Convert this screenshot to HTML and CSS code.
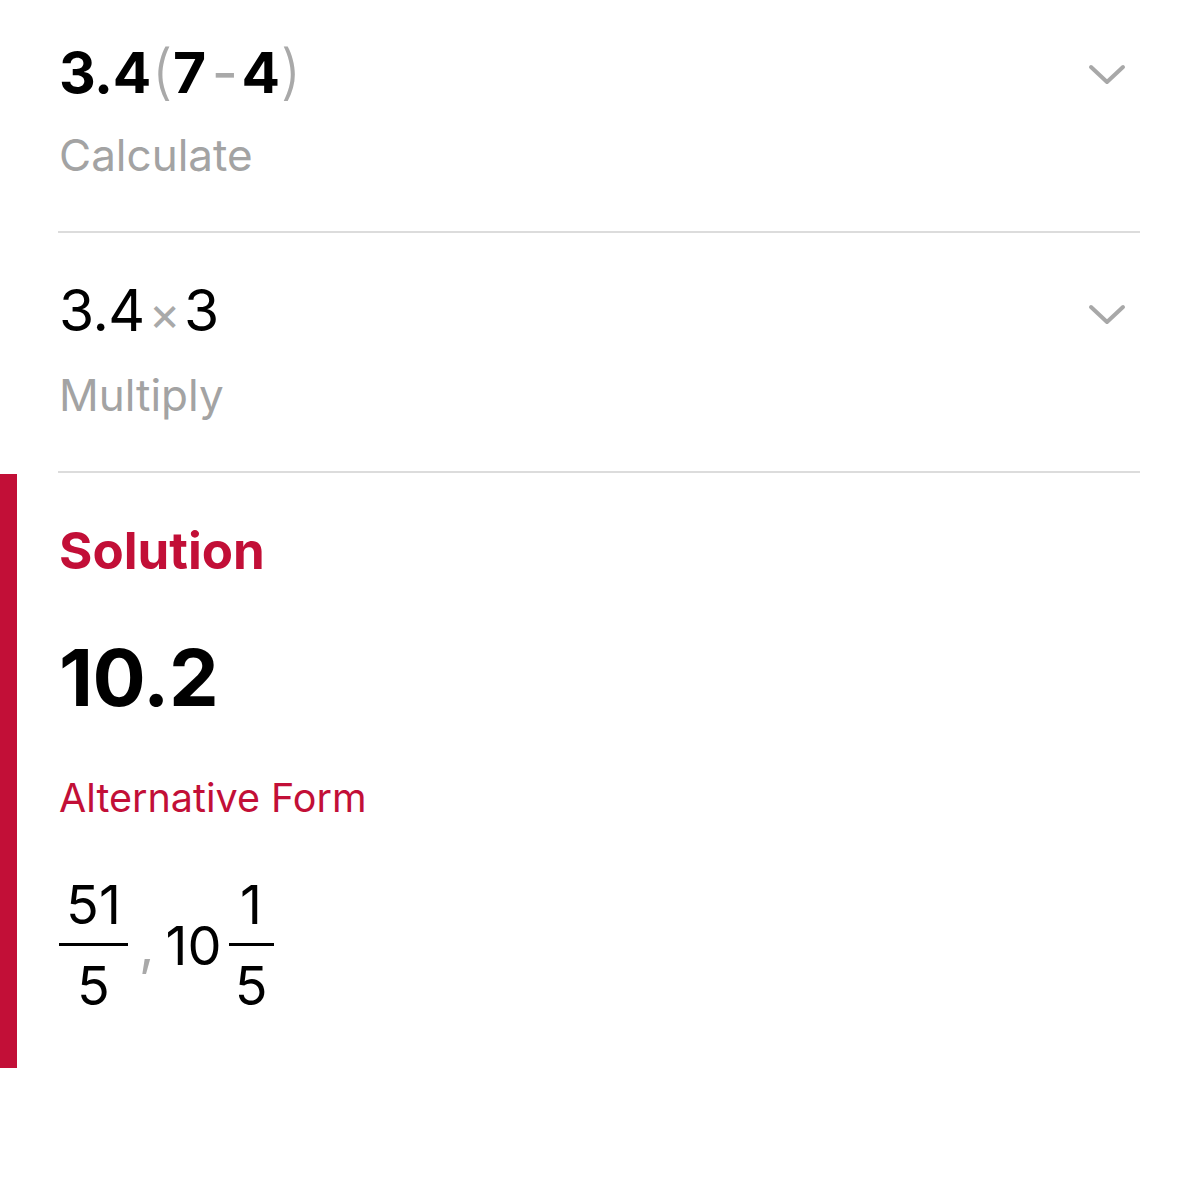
FILE: index.html
```html
<!DOCTYPE html>
<html>
<head>
<meta charset="utf-8">
<link rel="stylesheet" href="styles.css">
</head>
<body>
<div class="steps">
  <div class="step">
    <div class="step-row">
      <div class="expr expr-bold">3.4<span class="paren">(</span>7<span class="op minus">-</span>4<span class="paren">)</span></div>
      <svg class="chevron" viewBox="0 0 40 24" width="40" height="24"><path d="M4 4 L20 19 L36 4" fill="none" stroke="#a8a8a8" stroke-width="4" stroke-linecap="round" stroke-linejoin="round"/></svg>
    </div>
    <div class="label">Calculate</div>
  </div>
  <div class="step">
    <div class="step-row">
      <div class="expr">3.4<span class="op times">×</span>3</div>
      <svg class="chevron" viewBox="0 0 40 24" width="40" height="24"><path d="M4 4 L20 19 L36 4" fill="none" stroke="#a8a8a8" stroke-width="4" stroke-linecap="round" stroke-linejoin="round"/></svg>
    </div>
    <div class="label">Multiply</div>
  </div>
</div>
<div class="solution">
  <div class="sol-title">Solution</div>
  <div class="sol-value">10.2</div>
  <div class="alt-title">Alternative Form</div>
  <div class="alt-forms">
    <div class="frac"><span class="num">51</span><span class="bar"></span><span class="den">5</span></div>
    <span class="comma">,</span>
    <span class="whole">10</span>
    <div class="frac frac-small"><span class="num">1</span><span class="bar"></span><span class="den">5</span></div>
  </div>
</div>
</body>
</html>
```
FILE: styles.css
```css
html, body {
  margin: 0;
  padding: 0;
  background: #ffffff;
}
body {
  font-family: "Inter", "Liberation Sans", sans-serif;
  color: #000;
  width: 1200px;
}
.steps {
  padding: 0 60px 0 58px;
}
.step {
  padding: 44px 0 48px 1px;
  border-bottom: 2px solid #dcdcdc;
}
.step:first-child {
  padding-top: 37px;
}
.step-row {
  display: flex;
  align-items: center;
  justify-content: space-between;
  height: 70px;
}
.expr {
  font-size: 57px;
  line-height: 70px;
  font-weight: 400;
  letter-spacing: -0.5px;
}
.expr-bold {
  font-weight: 700;
}
.paren {
  color: #a9a9a9;
  font-weight: 300;
  font-size: 60px;
  margin: 0 1px;
}
.op {
  color: #a9a9a9;
  font-weight: 400;
}
.minus {
  margin: 0 4px 0 6px;
}
.times {
  margin: 0 4px;
  font-size: 48px;
}
.chevron {
  margin-right: 13px;
  margin-top: 6px;
}
.label {
  margin-top: 20px;
  font-size: 44px;
  line-height: 56px;
  color: #a3a3a3;
}
.solution {
  margin-top: 1px;
  border-left: 17px solid #c20f37;
  padding: 47px 0 54px 42px;
}
.sol-title {
  font-size: 51px;
  line-height: 60px;
  font-weight: 700;
  color: #c20f37;
}
.sol-value {
  margin-top: 51px;
  font-size: 79px;
  line-height: 90px;
  font-weight: 700;
  letter-spacing: -0.5px;
}
.alt-title {
  margin-top: 53px;
  font-size: 39.5px;
  line-height: 46px;
  color: #c20f37;
}
.alt-forms {
  margin-top: 56px;
  display: flex;
  align-items: center;
}
.frac {
  display: flex;
  flex-direction: column;
  align-items: center;
  font-size: 54px;
  line-height: 56px;
}
.frac .num {
  margin-bottom: 10px;
}
.frac .bar {
  display: block;
  width: 69px;
  height: 3px;
  background: #000;
}
.frac-small .bar {
  width: 45px;
}
.frac .den {
  margin-top: 12px;
}
.comma {
  font-size: 54px;
  color: #a9a9a9;
  margin: 0 11px 0 11px;
  line-height: 56px;
}
.whole {
  font-size: 54px;
  line-height: 56px;
  margin-right: 7px;
}
```
